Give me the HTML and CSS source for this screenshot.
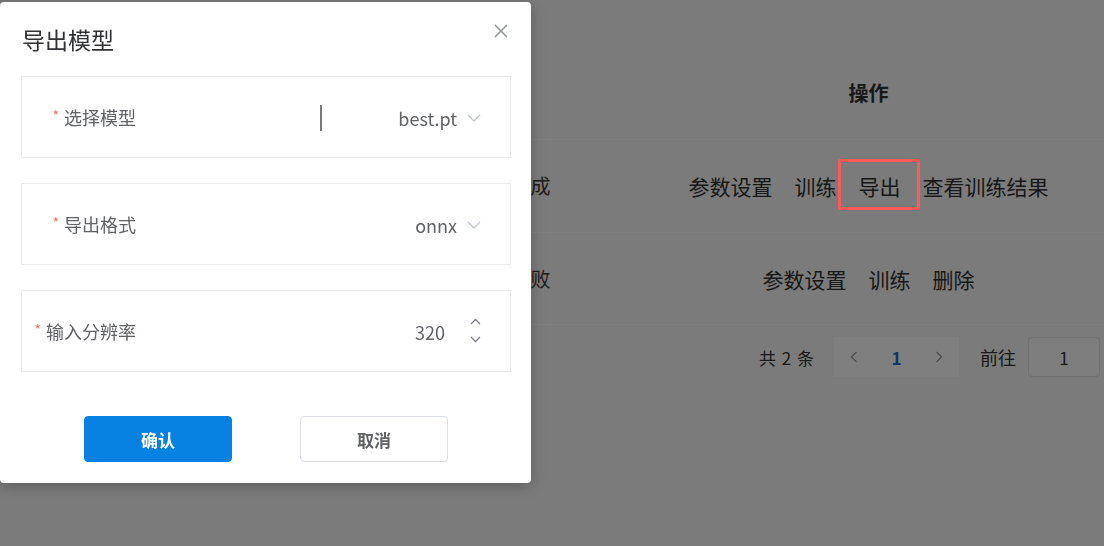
FILE: index.html
```html
<!DOCTYPE html>
<html lang="zh-CN">
<head>
<meta charset="utf-8">
<title>导出模型</title>
<link rel="stylesheet" href="styles.css">
</head>
<body>
<div class="page">
  <div class="table">
    <div class="row head">
      <div class="c-name"></div>
      <div class="c-status"></div>
      <div class="c-ops">操作</div>
    </div>
    <div class="row">
      <div class="c-name"></div>
      <div class="c-status">训练完成</div>
      <div class="c-ops">
        <span class="op">参数设置</span>
        <span class="op">训练</span>
        <span class="op hl">导出</span>
        <span class="op">查看训练结果</span>
      </div>
    </div>
    <div class="row">
      <div class="c-name"></div>
      <div class="c-status">训练失败</div>
      <div class="c-ops">
        <span class="op">参数设置</span>
        <span class="op">训练</span>
        <span class="op">删除</span>
      </div>
    </div>
  </div>
  <div class="pager">
    <span class="total">共 2 条</span>
    <div class="pages">
      <span class="pbtn">
        <svg width="8" height="12" viewBox="0 0 8 12"><path d="M6.5 1 L1.5 6 L6.5 11" fill="none" stroke="#9a9a9a" stroke-width="1.3"/></svg>
      </span>
      <span class="pnum">1</span>
      <span class="pbtn">
        <svg width="8" height="12" viewBox="0 0 8 12"><path d="M1.5 1 L6.5 6 L1.5 11" fill="none" stroke="#9a9a9a" stroke-width="1.3"/></svg>
      </span>
    </div>
    <span class="goto">前往</span>
    <span class="jump">1</span>
  </div>
</div>

<div class="mask"></div>

<div class="dialog">
  <div class="dlg-head">
    <span class="dlg-title">导出模型</span>
    <span class="dlg-close">
      <svg width="14" height="14" viewBox="0 0 14 14"><path d="M1 1 L13 13 M13 1 L1 13" fill="none" stroke="#909399" stroke-width="1.5"/></svg>
    </span>
  </div>
  <div class="form">
    <div class="item">
      <label class="label"><span class="star">*</span>选择模型</label>
      <div class="control">
        <div class="select">
          <span class="caret"></span>
          <span class="val">best.pt</span>
          <svg class="arrow" width="14" height="8" viewBox="0 0 14 8"><path d="M1 1 L7 7 L13 1" fill="none" stroke="#c0c4cc" stroke-width="1.3"/></svg>
        </div>
      </div>
    </div>
    <div class="item">
      <label class="label"><span class="star">*</span>导出格式</label>
      <div class="control">
        <div class="select">
          <span class="val">onnx</span>
          <svg class="arrow" width="14" height="8" viewBox="0 0 14 8"><path d="M1 1 L7 7 L13 1" fill="none" stroke="#c0c4cc" stroke-width="1.3"/></svg>
        </div>
      </div>
    </div>
    <div class="item">
      <label class="label"><span class="star">*</span>输入分辨率</label>
      <div class="control">
        <span class="val">320</span>
        <span class="spin">
          <svg width="11" height="7" viewBox="0 0 11 7"><path d="M1 6 L5.5 1.5 L10 6" fill="none" stroke="#7d8088" stroke-width="1.3"/></svg>
          <svg width="11" height="7" viewBox="0 0 11 7"><path d="M1 1 L5.5 5.5 L10 1" fill="none" stroke="#7d8088" stroke-width="1.3"/></svg>
        </span>
      </div>
    </div>
  </div>
  <div class="footer">
    <button class="btn primary">确认</button>
    <button class="btn plain">取消</button>
  </div>
</div>
</body>
</html>
```

FILE: styles.css
```css
* { box-sizing: border-box; }

html, body {
  margin: 0;
  padding: 0;
}

body {
  width: 1104px;
  height: 546px;
  overflow: hidden;
  background: #f6f6f6;
  font-family: "Noto Sans CJK SC", "Noto Sans", sans-serif;
  color: #333;
}

.page {
  width: 1104px;
  height: 546px;
}

.table {
  padding-top: 46px;
}

.row {
  display: grid;
  grid-template-columns: 388px 244px 1fr;
  height: 93px;
  border-bottom: 1px solid #ffffff;
  align-items: center;
  font-size: 21px;
  line-height: 24px;
}

.row.head {
  font-size: 20px;
  font-weight: 600;
  color: #333;
  height: 94px;
}

.row + .row + .row {
  height: 92px;
}

.c-status {
  text-align: center;
  font-size: 20px;
  color: #3a3a3a;
  padding-left: 1px;
}

.c-ops {
  display: flex;
  justify-content: center;
  gap: 22px;
  color: #303030;
  padding-left: 1px;
}

.op {
  position: relative;
}

.op.hl::after {
  content: "";
  position: absolute;
  left: -21px;
  right: -19px;
  top: -15px;
  bottom: -12px;
  border: 3px solid #ff5a5a;
  border-radius: 2px;
  z-index: 15;
}

.pager {
  margin-top: 12px;
  height: 40px;
  display: flex;
  justify-content: flex-end;
  align-items: center;
  padding-right: 4px;
  color: #333;
  font-size: 17px;
}

.total {
  margin-right: 20px;
  word-spacing: 2px;
}

.pages {
  display: flex;
  height: 40px;
  background: #ffffff;
  margin-right: 21px;
}

.pbtn {
  width: 40px;
  display: flex;
  align-items: center;
  justify-content: center;
}

.pnum {
  width: 45px;
  display: flex;
  align-items: center;
  justify-content: center;
  color: #1f6fc4;
  font-weight: 700;
}

.goto {
  font-size: 18px;
  margin-right: 12px;
}

.jump {
  width: 72px;
  height: 40px;
  border: 1px solid #e0e0e0;
  border-radius: 4px;
  background: #fafafa;
  display: flex;
  align-items: center;
  justify-content: center;
}

.mask {
  position: fixed;
  inset: 0;
  background: rgba(0, 0, 0, 0.5);
  z-index: 10;
}

.dialog {
  position: absolute;
  left: 0;
  top: 2px;
  width: 531px;
  height: 481px;
  background: #ffffff;
  border-radius: 4px;
  padding: 26px 20px 21px 21px;
  box-shadow: 0 3px 14px rgba(0, 0, 0, 0.25);
  z-index: 20;
}

.dlg-head {
  height: 24px;
  margin-bottom: 24px;
  display: flex;
  align-items: center;
}

.dlg-title {
  font-size: 23px;
  line-height: 24px;
  color: #303133;
  padding-left: 1px;
  position: relative;
  top: -1px;
}

.dlg-close {
  position: absolute;
  right: 23px;
  top: 22px;
  width: 14px;
  height: 14px;
  display: flex;
}

.form {
  display: flex;
  flex-direction: column;
  gap: 25px;
}

.item {
  height: 82px;
  border: 1px solid #ececec;
  display: flex;
  align-items: center;
  padding-top: 1px;
  padding-right: 29px;
}

.label {
  width: 114px;
  text-align: right;
  font-size: 18px;
  line-height: 24px;
  color: #606266;
  white-space: nowrap;
}

.star {
  color: #f56c6c;
  font-size: 14px;
  margin-right: 5px;
  position: relative;
  top: -4px;
}

.control {
  flex: 1;
  display: flex;
  justify-content: flex-end;
  align-items: center;
}

.select {
  width: 161px;
  display: flex;
  align-items: center;
}

.caret {
  width: 2px;
  height: 26px;
  background: #7a7a7a;
}

.val {
  flex: 1;
  text-align: right;
  font-size: 18px;
  line-height: 24px;
  color: #606266;
}

.arrow {
  margin-left: 10px;
  flex: none;
}

.spin {
  display: flex;
  flex-direction: column;
  gap: 11px;
  margin-left: 25px;
  margin-top: -2px;
}

.spin svg {
  display: block;
}

.footer {
  margin-top: 44px;
  display: flex;
  justify-content: center;
  gap: 68px;
}

.btn {
  width: 148px;
  height: 46px;
  border-radius: 4px;
  font-family: "Noto Sans CJK SC", sans-serif;
  font-size: 17px;
  font-weight: 600;
  cursor: pointer;
}

.btn.primary {
  background: #0782e2;
  border: 1px solid #0782e2;
  color: #ffffff;
}

.btn.plain {
  background: #ffffff;
  border: 1px solid #dcdfe6;
  color: #606266;
}
```
